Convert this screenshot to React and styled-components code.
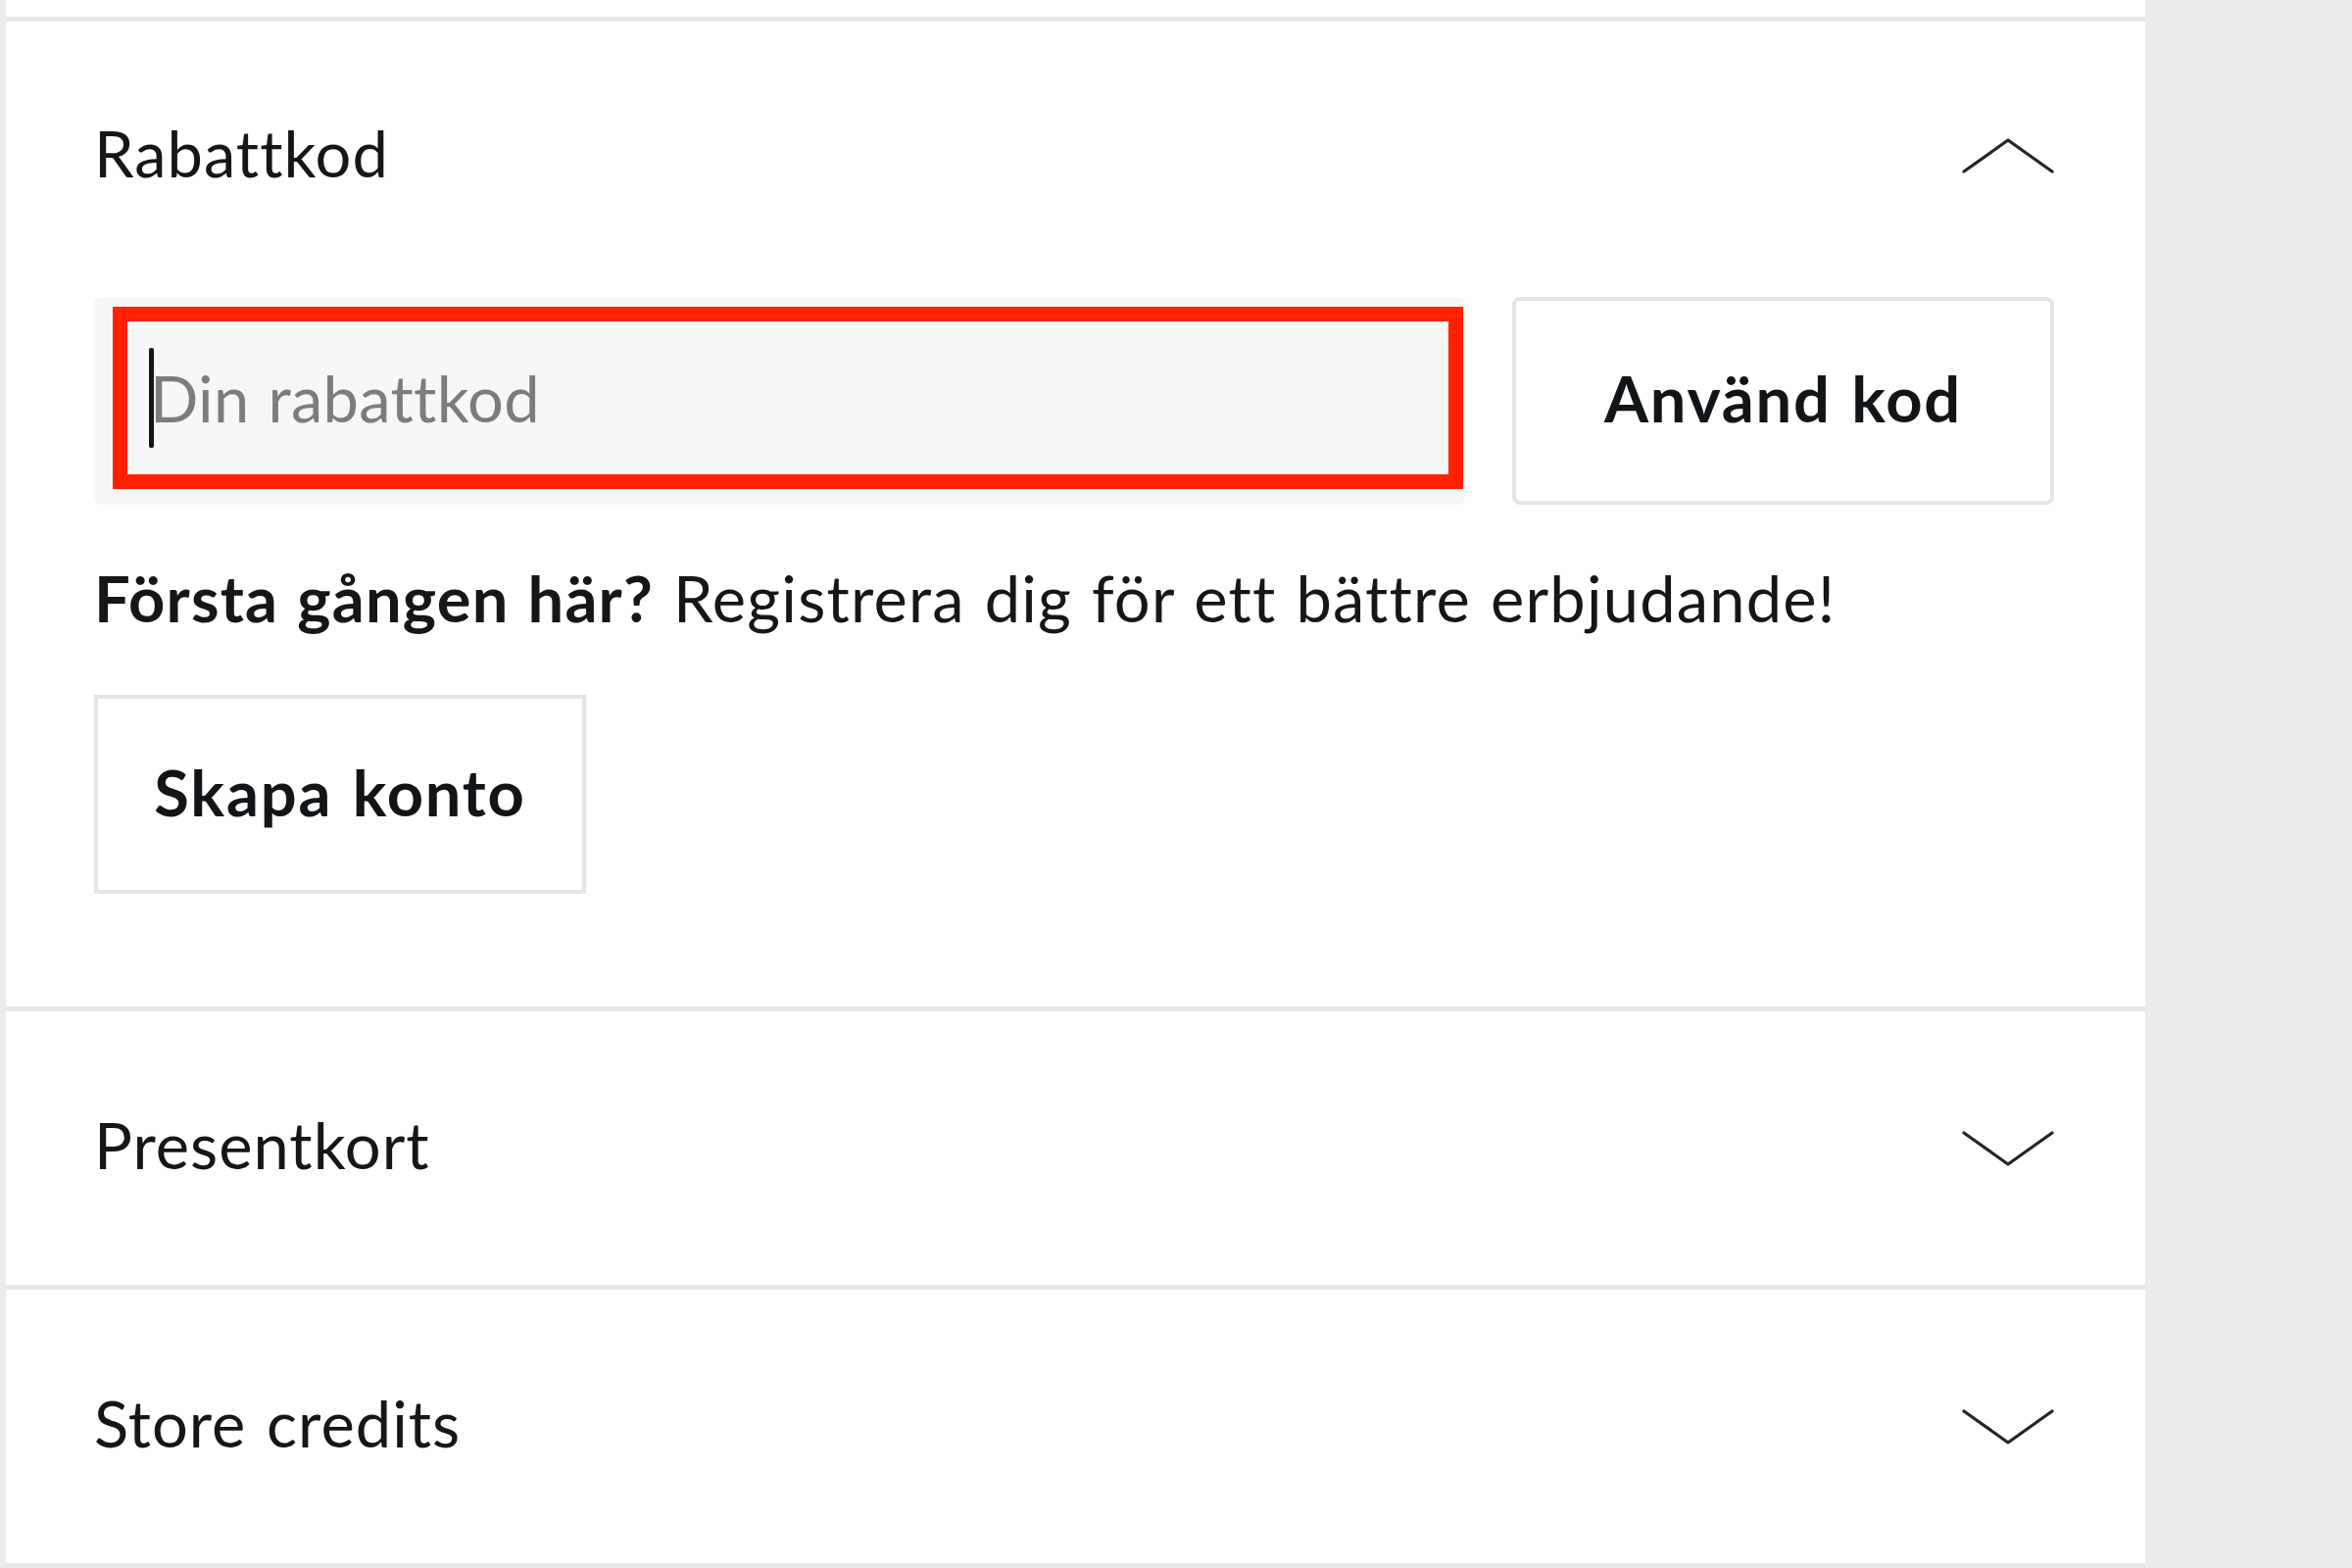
import React, {useState} from 'react';
import styled, {createGlobalStyle} from 'styled-components';

const GlobalStyle = createGlobalStyle`
  html, body {
    margin: 0;
    padding: 0;
    background: #ebebeb;
  }
  body {
    font-family: 'Lato', 'Liberation Sans', sans-serif;
    color: #141618;
  }
`;

const Page = styled.div`
  min-height: 1600px;
  padding-left: 6px;
`;

const Panel = styled.div`
  width: 2183px;
  background: #fff;
`;

const TopEdge = styled.div`
  height: 17px;
  border-bottom: 5px solid #e5e6e9;
`;

const Section = styled.section`
  padding: 0 93px 0 90px;
  border-bottom: 5px solid #e5e6e9;
`;

const Header = styled.button`
  display: flex;
  align-items: center;
  justify-content: space-between;
  width: 100%;
  height: ${(p) => p.$height}px;
  padding: 0;
  border: none;
  background: none;
  cursor: pointer;
  font-family: inherit;
  font-size: 65px;
  font-weight: 400;
  letter-spacing: 1px;
  word-spacing: 3px;
  color: #141618;
  text-align: left;
`;

const Title = styled.span`
  margin-bottom: 7px;
`;

const Body = styled.div`
  padding: 7px 0 115px;
`;

const CodeRow = styled.div`
  display: flex;
  gap: 48px;
`;

const FieldWrap = styled.div`
  flex: 1;
  height: 212px;
  box-sizing: border-box;
  padding: 10px 2px 16px 19px;
  background: #f7f7f7;
  border-radius: 8px;
`;

const Field = styled.label`
  display: flex;
  align-items: center;
  height: 100%;
  box-sizing: border-box;
  padding-left: 22px;
  border: 15px solid #ff2200;
  background: #f7f7f7;
`;

const Caret = styled.span`
  flex: none;
  width: 5px;
  height: 102px;
  margin-right: -4px;
  border-radius: 2px;
  background: #111517;
`;

const Input = styled.input`
  flex: 1;
  min-width: 0;
  border: none;
  outline: none;
  background: transparent;
  padding: 0;
  font-family: inherit;
  font-size: 65px;
  letter-spacing: 0.3px;
  word-spacing: 2px;
  color: #141618;

  &::placeholder {
    color: #7c7c7c;
  }
`;

const OutlineButton = styled.button`
  flex: none;
  box-sizing: border-box;
  width: ${(p) => p.$width}px;
  height: ${(p) => p.$height}px;
  padding: 0 0 6px;
  border: 4px solid #e3e4e7;
  border-radius: ${(p) => p.$radius}px;
  background: #fff;
  cursor: pointer;
  font-family: inherit;
  font-size: 65px;
  font-weight: 700;
  letter-spacing: 1.8px;
  word-spacing: 3px;
  color: #111517;
`;

const Note = styled.p`
  margin: 56px 0 60px;
  font-size: 65px;
  line-height: 78px;
  letter-spacing: 1.2px;
  word-spacing: 2px;

  strong {
    font-weight: 700;
  }
`;

const Chevron = ({up}) => (
    <svg width="94" height="38" viewBox="0 0 94 38" fill="none">
        <polyline
            points={up ? '2,35 47,3 92,35' : '2,3 47,35 92,3'}
            stroke="#222528"
            strokeWidth="3.2"
            strokeLinecap="round"
            strokeLinejoin="round"
        />
    </svg>
);

const App = () => {
    const [open, setOpen] = useState('rabattkod');
    const toggle = (key) => setOpen(open === key ? null : key);

    return (
        <Page>
            <GlobalStyle/>
            <Panel>
                <TopEdge/>

                <Section>
                    <Header $height={274} onClick={() => toggle('rabattkod')}>
                        <Title>Rabattkod</Title>
                        <Chevron up={open === 'rabattkod'}/>
                    </Header>
                    {open === 'rabattkod' && (
                        <Body>
                            <CodeRow>
                                <FieldWrap>
                                    <Field>
                                        <Caret/>
                                        <Input placeholder="Din rabattkod"/>
                                    </Field>
                                </FieldWrap>
                                <OutlineButton $width={553} $height={212} $radius={8}>
                                    Använd kod
                                </OutlineButton>
                            </CodeRow>
                            <Note>
                                <strong>Första gången här?</strong> Registrera dig för ett bättre erbjudande!
                            </Note>
                            <OutlineButton $width={502} $height={203} $radius={0}>
                                Skapa konto
                            </OutlineButton>
                        </Body>
                    )}
                </Section>

                <Section>
                    <Header $height={279} onClick={() => toggle('presentkort')}>
                        <Title>Presentkort</Title>
                        <Chevron up={open === 'presentkort'}/>
                    </Header>
                </Section>

                <Section>
                    <Header $height={279} onClick={() => toggle('credits')}>
                        <Title>Store credits</Title>
                        <Chevron up={open === 'credits'}/>
                    </Header>
                </Section>
            </Panel>
        </Page>
    );
};

export default App;
